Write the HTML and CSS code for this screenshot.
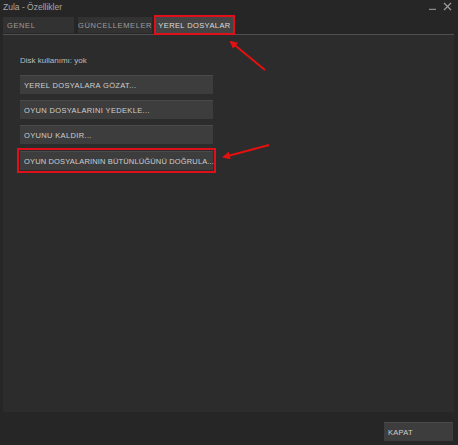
FILE: index.html
```html
<!DOCTYPE html>
<html lang="tr">
<head>
  <meta charset="UTF-8">
  <title>Zula - Özellikler</title>
  <link rel="stylesheet" href="styles.css">
</head>
<body>
  <div class="window">
    <div class="titlebar">
      <span class="title">Zula - Özellikler</span>
      <div class="controls">
        <svg width="8" height="8" viewBox="0 0 8 8"><path d="M0 7.5h7" stroke="#8a8a8a" stroke-width="1.5"/></svg>
        <svg width="9" height="9" viewBox="0 0 9 9"><path d="M1 1l7 7M8 1l-7 7" stroke="#9a9a9a" stroke-width="1.3"/></svg>
      </div>
    </div>

    <div class="tabs">
      <div class="tab tab-general">GENEL</div>
      <div class="tab tab-updates">GÜNCELLEMELER</div>
      <div class="tab tab-local active marked">YEREL DOSYALAR</div>
    </div>

    <div class="panel">
      <p class="disk">Disk kullanımı: yok</p>
      <div class="actions">
        <button class="btn">YEREL DOSYALARA GÖZAT...</button>
        <button class="btn">OYUN DOSYALARINI YEDEKLE...</button>
        <button class="btn">OYUNU KALDIR...</button>
        <div class="marked">
          <button class="btn btn-long">OYUN DOSYALARININ BÜTÜNLÜĞÜNÜ DOĞRULA...</button>
        </div>
      </div>
    </div>

    <div class="footer">
      <button class="btn close">KAPAT</button>
    </div>

    <!-- red pointer arrows drawn over the dialog -->
    <svg class="arrows" width="458" height="445" viewBox="0 0 458 445">
      <defs>
        <marker id="head" markerWidth="8" markerHeight="8" refX="6" refY="4" orient="auto" markerUnits="userSpaceOnUse">
          <path d="M0 0L8 4L0 8z" fill="#e51010"/>
        </marker>
      </defs>
      <line x1="265" y1="70" x2="231" y2="42" stroke="#e51010" stroke-width="2" marker-end="url(#head)"/>
      <line x1="269" y1="145" x2="224" y2="157" stroke="#e51010" stroke-width="2" marker-end="url(#head)"/>
    </svg>
  </div>
</body>
</html>
```

FILE: styles.css
```css
body {
  margin: 0;
  background-color: #262626;
  font-family: "Liberation Sans", Arial, sans-serif;
  color: #c4c4c4;
}
.window {
  position: relative;
  width: 458px;
  height: 445px;
  padding: 0 4px 0 3px;
  box-sizing: border-box;
  display: flex;
  flex-direction: column;
}
.titlebar {
  height: 16px;
  display: flex;
  align-items: center;
  justify-content: space-between;
}
.title {
  font-size: 8.5px;
  color: #a8a8a8;
  margin-top: -3px;
}
.controls {
  display: flex;
  gap: 6px;
  align-items: center;
  margin-top: -4px;
  margin-right: 2px;
}
.tabs {
  display: flex;
  gap: 4px;
  height: 18px;
  border-bottom: 1px solid #505050;
}
.tab {
  background-color: #323232;
  font-size: 7.5px;
  letter-spacing: 0.6px;
  color: #9c9c9c;
  display: flex;
  align-items: center;
  height: 16px;
  margin-top: 1px;
  white-space: nowrap;
}
.tab-general {
  width: 71px;
  padding-left: 4px;
  box-sizing: border-box;
}
.tab-updates {
  width: 74px;
  justify-content: center;
}
.tab-local {
  width: 77px;
  justify-content: center;
}
.tab.active {
  background-color: #444;
  color: #dcdcdc;
  letter-spacing: 0.4px;
}
.marked {
  outline: 2px solid #e0101a;
  outline-offset: 0;
}
.panel {
  background-color: #2c2c2c;
  padding: 0 17px;
  height: 377px;
  flex: none;
}
.disk {
  font-size: 8px;
  margin: 21px 0 10px;
  color: #bcbcbc;
}
.actions {
  display: flex;
  flex-direction: column;
  gap: 6px;
  width: 193px;
}
.actions .marked {
  width: 195px;
  margin-left: -1px;
  padding: 1px 0 0 1px;
  box-sizing: border-box;
  height: 21px;
}
.btn {
  display: block;
  width: 193px;
  height: 19px;
  border: none;
  border-top: 1px solid #4a4a4a;
  background-color: #3d3d3d;
  color: #cecece;
  font-family: "Liberation Sans", Arial, sans-serif;
  font-size: 7.5px;
  letter-spacing: 0.35px;
  text-align: left;
  padding: 0 4px;
  white-space: nowrap;
}
.btn-long {
  letter-spacing: 0.15px;
}
.footer {
  display: flex;
  justify-content: flex-end;
  padding-top: 10px;
}
.btn.close {
  width: 69px;
  margin-right: 1px;
  letter-spacing: 0.3px;
}
.arrows {
  position: absolute;
  left: 0;
  top: 0;
  pointer-events: none;
}
```
